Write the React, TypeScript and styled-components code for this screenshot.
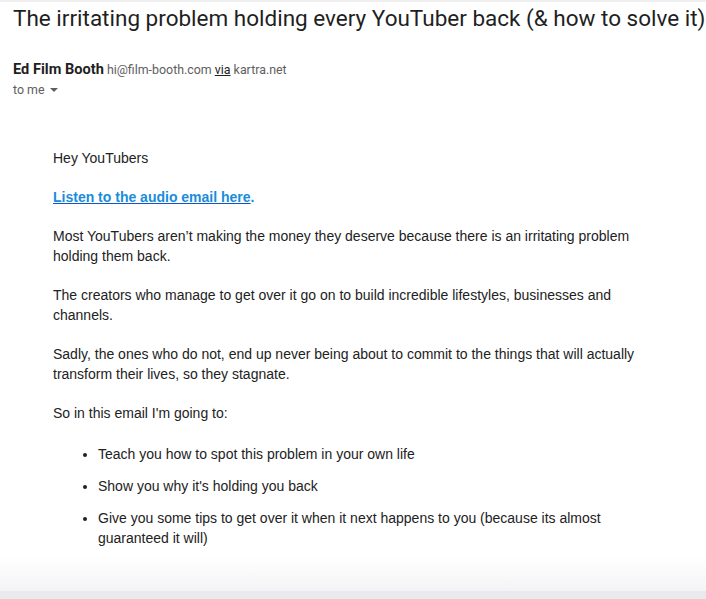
import React from "react";
import styled, { createGlobalStyle } from "styled-components";

const Global = createGlobalStyle`
  html, body { margin: 0; padding: 0; background: #ffffff; }
  body { font-family: Roboto, "Liberation Sans", Arial, sans-serif; }
  * { box-sizing: border-box; }
`;

const Page = styled.div`
  height: 599px;
  display: flex;
  flex-direction: column;
  border-top: 2px solid #f0f0f0;
  overflow: hidden;
`;

const Main = styled.div`
  position: relative;
  flex: 1;
  overflow: hidden;
`;

const Title = styled.h1`
  margin: 0;
  padding: 2px 0 0 13px;
  font-family: Roboto, "Noto Sans", sans-serif;
  font-weight: 400;
  font-size: 22.5px;
  line-height: 28px;
  color: #1f1f1f;
  white-space: nowrap;
`;

const Sender = styled.div`
  padding: 28px 0 0 13px;
  display: flex;
  flex-direction: column;
  gap: 2px;
`;

const FromLine = styled.div`
  font-size: 12.4px;
  line-height: 18px;
  color: #5e5e5e;
`;

const Name = styled.span`
  font-weight: 700;
  font-size: 14.6px;
  color: #1f1f1f;
`;

const Via = styled.span`
  color: #222;
  text-decoration: underline;
`;

const ToLine = styled.div`
  display: flex;
  align-items: center;
  gap: 5px;
  font-size: 12.4px;
  line-height: 18px;
  color: #5e5e5e;
`;

const Body = styled.div`
  padding: 49px 0 0 53px;
  max-width: 653px;
  font-family: "Liberation Sans", Arial, sans-serif;
  font-size: 14px;
  color: #222222;
`;

const P = styled.p`
  margin: 0 0 19px;
  line-height: 20px;
`;

const Link = styled.a`
  color: #1155cc;
  font-weight: 700;
`;

const LinkText = styled.span`
  color: #1a8cdb;
`;

const Dot = styled.span`
  color: #1a8cdb;
  font-weight: 700;
`;

const List = styled.ul`
  margin: 21px 0 0;
  padding-left: 45px;
`;

const Item = styled.li`
  line-height: 20px;
  margin-bottom: 12px;
`;

const Fade = styled.div`
  position: absolute;
  left: 0;
  right: 0;
  bottom: 0;
  height: 34px;
  background: linear-gradient(to bottom, rgba(246, 246, 248, 0), #f4f4f6);
`;

const BottomBar = styled.div`
  height: 8px;
  background: #e9eaee;
  flex-shrink: 0;
`;

const Caret = () => (
  <svg width="8" height="4" viewBox="0 0 8 4">
    <path d="M0 0 L8 0 L4 4 Z" fill="#5e5e5e" />
  </svg>
);

export default function App() {
  return (
    <>
      <Global />
      <Page>
        <Main>
          <Title>The irritating problem holding every YouTuber back (&amp; how to solve it)</Title>
          <Sender>
            <FromLine>
              <Name>Ed Film Booth</Name> hi@film-booth.com <Via>via</Via> kartra.net
            </FromLine>
            <ToLine>
              to me <Caret />
            </ToLine>
          </Sender>
          <Body>
            <P>Hey YouTubers</P>
            <P>
              <Link href="#">
                <LinkText>Listen to the audio email here</LinkText>
              </Link>
              <Dot>.</Dot>
            </P>
            <P>
              Most YouTubers aren’t making the money they deserve because there is an irritating problem
              holding them back.
            </P>
            <P>
              The creators who manage to get over it go on to build incredible lifestyles, businesses and
              channels.
            </P>
            <P>
              Sadly, the ones who do not, end up never being about to commit to the things that will actually
              transform their lives, so they stagnate.
            </P>
            <P style={{ marginBottom: 0 }}>So in this email I'm going to:</P>
            <List>
              <Item>Teach you how to spot this problem in your own life</Item>
              <Item>Show you why it's holding you back</Item>
              <Item>
                Give you some tips to get over it when it next happens to you (because its almost guaranteed
                it will)
              </Item>
            </List>
          </Body>
          <Fade />
        </Main>
        <BottomBar />
      </Page>
    </>
  );
}
